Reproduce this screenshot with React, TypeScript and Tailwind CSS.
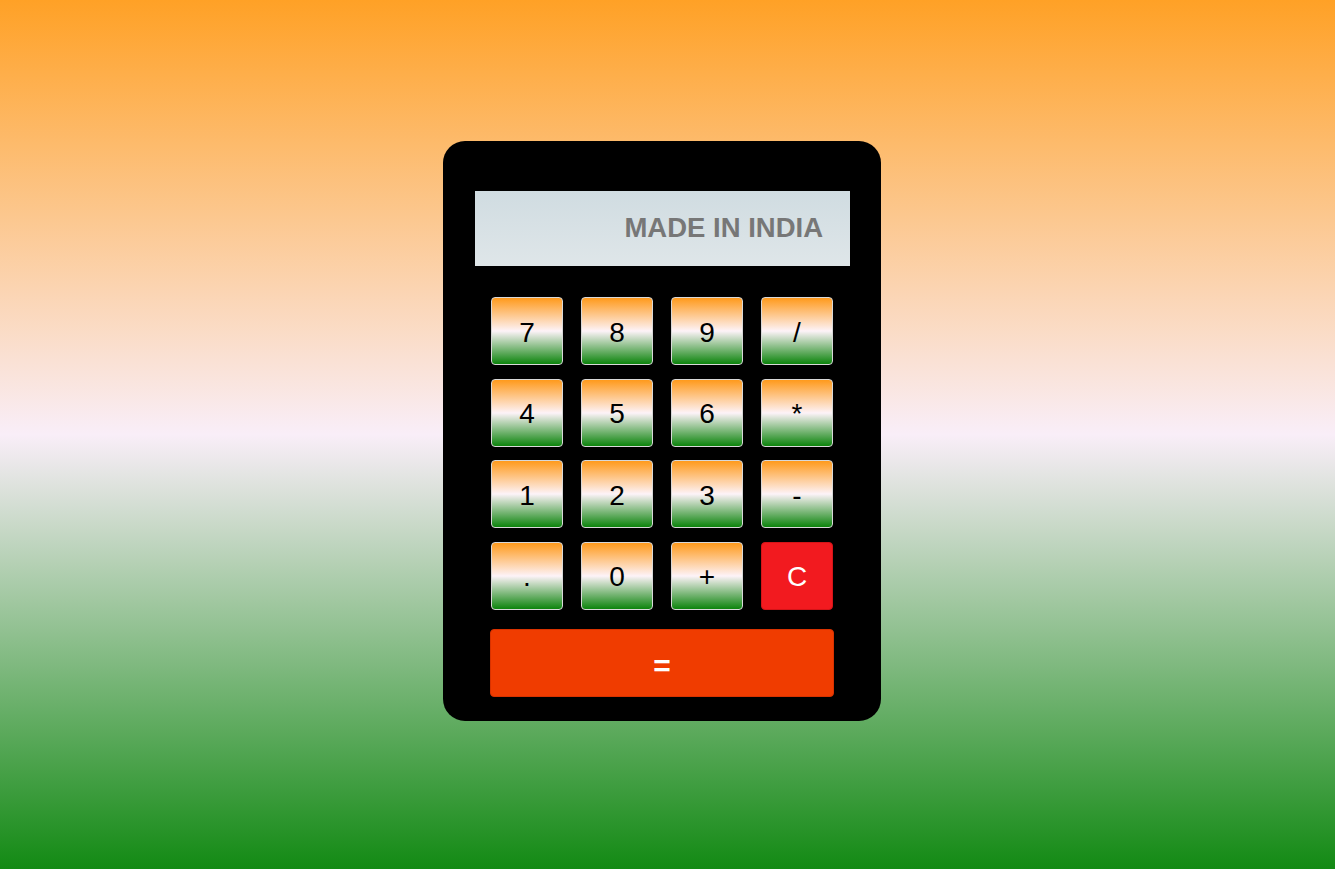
import React from "react";

const keys = ["7","8","9","/","4","5","6","*","1","2","3","-",".","0","+"];

export default function App() {
  return (
    <div className="w-[1335px] h-[869px] pt-[141px] pl-[443px] bg-[linear-gradient(to_bottom,#ffa126_0%,#f9eef8_50%,#138a14_100%)] font-['Liberation_Sans',Arial,sans-serif]">
      <div className="w-[438px] h-[580px] bg-black rounded-[22px] pt-[50px] px-[32px] flex flex-col">
        <div className="w-[375px] h-[75px] bg-[linear-gradient(to_bottom,#d0dce1,#dfe6e9)] flex items-center justify-end pr-[27px]">
          <span className="text-[27.5px] font-bold text-[#777777] leading-none mb-[2px]">MADE IN INDIA</span>
        </div>
        <div className="mt-[31px] px-[16px] grid grid-cols-[72px_72px_72px_72px] gap-x-[18px] gap-y-[13.5px]">
          {keys.map((k) => (
            <button
              key={k}
              className="h-[68px] pt-[3px] rounded-[4px] border border-[#d8d8d8] bg-[linear-gradient(to_bottom,#ff9a1c_0%,#fdf3f8_50%,#0c840c_100%)] text-[28px] text-black flex items-center justify-center"
            >
              {k}
            </button>
          ))}
          <button className="h-[68px] pt-[3px] rounded-[4px] border border-[#d41418] bg-[#f21a1f] text-[28px] text-white flex items-center justify-center">
            C
          </button>
        </div>
        <button className="mt-[19px] ml-[15px] w-[344px] h-[68px] pt-[5px] rounded-[4px] border border-[#d83200] bg-[#f03c00] text-[30px] font-bold text-white flex items-center justify-center">
          =
        </button>
      </div>
    </div>
  );
}
